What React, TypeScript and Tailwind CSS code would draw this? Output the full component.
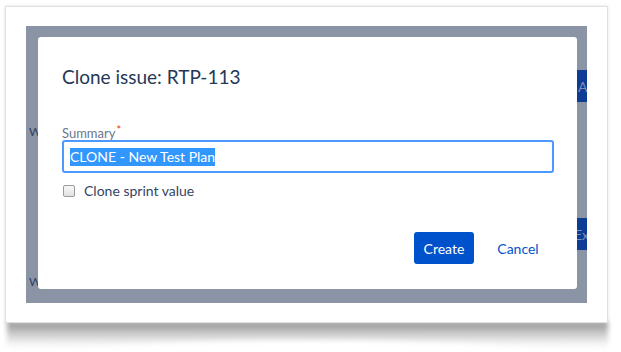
import React from 'react';

const CurvedShadow: React.FC = () => (
    <svg
        className="pointer-events-none absolute left-[-2px] top-[308px] z-0"
        width="609"
        height="44"
        viewBox="0 0 609 44"
    >
        <defs>
            <linearGradient id="shadeFade" x1="0" y1="0" x2="0" y2="1">
                <stop offset="0" stopColor="#7a7a7a" stopOpacity="0.85" />
                <stop offset="0.5" stopColor="#a8a8a8" stopOpacity="0.45" />
                <stop offset="1" stopColor="#ffffff" stopOpacity="0" />
            </linearGradient>
            <filter id="shadeBlur" x="-5%" y="-30%" width="110%" height="160%">
                <feGaussianBlur stdDeviation="2.5" />
            </filter>
        </defs>
        <path
            d="M4 8 H605 V38 Q304 14 4 38 Z"
            fill="url(#shadeFade)"
            filter="url(#shadeBlur)"
        />
    </svg>
);

const App: React.FC = () => {
    return (
        <div className="min-h-screen bg-white pl-[5px] pt-[6px] font-['Lato','Liberation_Sans',sans-serif]">
            <div className="relative w-[603px]">
                <CurvedShadow />

                {/* Screenshot frame */}
                <div className="relative z-10 h-[317px] border border-[#e0e0e0] bg-white pl-[20px] pt-[19px] shadow-[0_0_3px_rgba(0,0,0,0.12)]">
                    {/* Dimmed page behind the dialog */}
                    <div className="relative h-[277px] w-[561px] overflow-hidden bg-[#8b94a5] pl-[12px] pt-[11px]">
                        <span className="absolute left-[3px] top-[99px] text-[12px] leading-[14px] text-[#2f3f5e]">W</span>
                        <span className="absolute left-[3px] top-[249px] text-[12px] leading-[14px] text-[#2f3f5e]">W</span>
                        <div className="absolute left-[540px] top-[44px] flex h-[32px] w-[60px] items-center bg-[#0c3c93] pl-[12px] text-[14px] text-[#7d8fb8]">
                            Add
                        </div>
                        <div className="absolute left-[536px] top-[192px] flex h-[32px] w-[70px] items-center bg-[#0c3c93] pl-[12px] text-[14px] text-[#7d8fb8]">
                            Export
                        </div>

                        {/* Dialog */}
                        <div className="relative flex h-[252px] w-[539px] flex-col rounded-[3px] bg-white pl-[24px] pt-[28px]">
                            <h2 className="text-[19px] font-normal leading-[24px] text-[#253858]">Clone issue: RTP-113</h2>

                            <label className="mt-[37px] flex h-[14px] text-[13px] font-normal leading-[14px] text-[#6b778c]">
                                Summary
                                <span className="ml-[1px] -mt-[3px] text-[11px] text-[#de350b]">*</span>
                            </label>

                            <div className="flex h-[33px] w-[492px] items-center rounded-[3px] border-2 border-[#4c9aff] bg-white pl-[6px]">
                                <span className="bg-[#3297fd] text-[14px] leading-[18px] text-white">CLONE - New Test Plan</span>
                            </div>

                            <div className="mt-[8px] flex h-[20px] items-center gap-[9px] pl-[1px]">
                                <span className="h-[12px] w-[12px] rounded-[2px] border border-[#9a9a9a] bg-gradient-to-b from-[#f7f7f7] to-[#e3e3e3]" />
                                <span className="text-[14px] leading-[20px] text-[#344563]">Clone sprint value</span>
                            </div>

                            <div className="mt-[31px] flex justify-end gap-[14px] pr-[29px]">
                                <button className="flex h-[32px] w-[60px] items-center justify-center rounded-[3px] bg-[#0052cc] text-[14px] text-white">
                                    Create
                                </button>
                                <button className="flex h-[32px] w-[60px] items-center justify-center text-[14px] text-[#0052cc]">
                                    Cancel
                                </button>
                            </div>
                        </div>
                    </div>
                </div>
            </div>
        </div>
    );
};

export default App;
